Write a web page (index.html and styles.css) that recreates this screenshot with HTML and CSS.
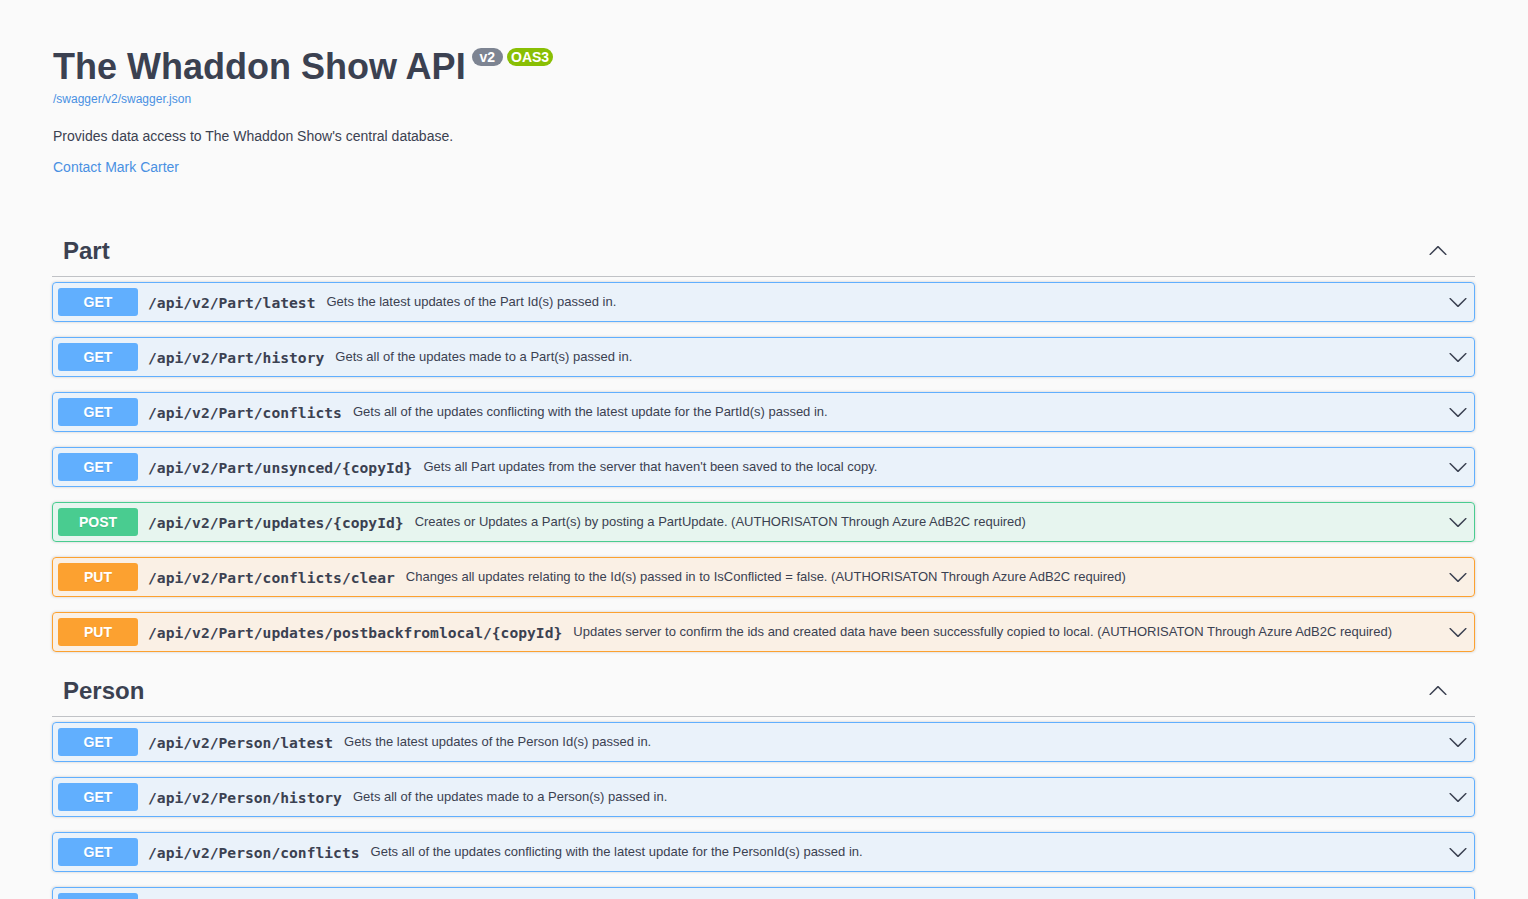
FILE: index.html
```html
<!DOCTYPE html>
<html lang="en">
<head>
<meta charset="utf-8">
<title>The Whaddon Show API</title>
<link rel="stylesheet" href="styles.css">
</head>
<body>
<div class="swagger-ui">
  <div class="wrapper">
    <section class="info">
      <hgroup class="main">
        <h2 class="title">The Whaddon Show API<small class="badge"><span class="version"> v2 </span></small><small class="badge oas"><span class="version">OAS3</span></small></h2>
        <a class="url" href="#">/swagger/v2/swagger.json</a>
      </hgroup>
      <p class="description">Provides data access to The Whaddon Show's central database.</p>
      <div class="contact"><a href="#">Contact Mark Carter</a></div>
    </section>

    <section class="tag-section">
      <h3 class="tag">
        <span class="tag-name">Part</span>
        <button class="expand" aria-label="collapse"><svg width="20" height="20" viewBox="0 0 20 20"><path d="M17.418 14.908c.272.268.709.268.979 0s.271-.701 0-.969l-7.908-7.83c-.27-.268-.707-.268-.979 0l-7.908 7.83c-.27.268-.27.701 0 .969.271.268.709.268.979 0L10 7.767l7.418 7.141z"/></svg></button>
      </h3>
      <div class="opblock get"><div class="summary"><span class="method">GET</span><span class="path">/api/v2/Part/latest</span><span class="desc">Gets the latest updates of the Part Id(s) passed in.</span><svg class="arrow" width="20" height="20" viewBox="0 0 20 20"><path d="M17.418 6.109c.272-.268.709-.268.979 0s.271.701 0 .969l-7.908 7.83c-.27.268-.707.268-.979 0l-7.908-7.83c-.27-.268-.27-.701 0-.969.271-.268.709-.268.979 0L10 13.25l7.418-7.141z"/></svg></div></div>
      <div class="opblock get"><div class="summary"><span class="method">GET</span><span class="path">/api/v2/Part/history</span><span class="desc">Gets all of the updates made to a Part(s) passed in.</span><svg class="arrow" width="20" height="20" viewBox="0 0 20 20"><path d="M17.418 6.109c.272-.268.709-.268.979 0s.271.701 0 .969l-7.908 7.83c-.27.268-.707.268-.979 0l-7.908-7.83c-.27-.268-.27-.701 0-.969.271-.268.709-.268.979 0L10 13.25l7.418-7.141z"/></svg></div></div>
      <div class="opblock get"><div class="summary"><span class="method">GET</span><span class="path">/api/v2/Part/conflicts</span><span class="desc">Gets all of the updates conflicting with the latest update for the PartId(s) passed in.</span><svg class="arrow" width="20" height="20" viewBox="0 0 20 20"><path d="M17.418 6.109c.272-.268.709-.268.979 0s.271.701 0 .969l-7.908 7.83c-.27.268-.707.268-.979 0l-7.908-7.83c-.27-.268-.27-.701 0-.969.271-.268.709-.268.979 0L10 13.25l7.418-7.141z"/></svg></div></div>
      <div class="opblock get"><div class="summary"><span class="method">GET</span><span class="path">/api/v2/Part/unsynced/{copyId}</span><span class="desc">Gets all Part updates from the server that haven't been saved to the local copy.</span><svg class="arrow" width="20" height="20" viewBox="0 0 20 20"><path d="M17.418 6.109c.272-.268.709-.268.979 0s.271.701 0 .969l-7.908 7.83c-.27.268-.707.268-.979 0l-7.908-7.83c-.27-.268-.27-.701 0-.969.271-.268.709-.268.979 0L10 13.25l7.418-7.141z"/></svg></div></div>
      <div class="opblock post"><div class="summary"><span class="method">POST</span><span class="path">/api/v2/Part/updates/{copyId}</span><span class="desc">Creates or Updates a Part(s) by posting a PartUpdate. (AUTHORISATON Through Azure AdB2C required)</span><svg class="arrow" width="20" height="20" viewBox="0 0 20 20"><path d="M17.418 6.109c.272-.268.709-.268.979 0s.271.701 0 .969l-7.908 7.83c-.27.268-.707.268-.979 0l-7.908-7.83c-.27-.268-.27-.701 0-.969.271-.268.709-.268.979 0L10 13.25l7.418-7.141z"/></svg></div></div>
      <div class="opblock put"><div class="summary"><span class="method">PUT</span><span class="path">/api/v2/Part/conflicts/clear</span><span class="desc">Changes all updates relating to the Id(s) passed in to IsConflicted = false. (AUTHORISATON Through Azure AdB2C required)</span><svg class="arrow" width="20" height="20" viewBox="0 0 20 20"><path d="M17.418 6.109c.272-.268.709-.268.979 0s.271.701 0 .969l-7.908 7.83c-.27.268-.707.268-.979 0l-7.908-7.83c-.27-.268-.27-.701 0-.969.271-.268.709-.268.979 0L10 13.25l7.418-7.141z"/></svg></div></div>
      <div class="opblock put"><div class="summary"><span class="method">PUT</span><span class="path">/api/v2/Part/updates/postbackfromlocal/{copyId}</span><span class="desc">Updates server to confirm the ids and created data have been successfully copied to local. (AUTHORISATON Through Azure AdB2C required)</span><svg class="arrow" width="20" height="20" viewBox="0 0 20 20"><path d="M17.418 6.109c.272-.268.709-.268.979 0s.271.701 0 .969l-7.908 7.83c-.27.268-.707.268-.979 0l-7.908-7.83c-.27-.268-.27-.701 0-.969.271-.268.709-.268.979 0L10 13.25l7.418-7.141z"/></svg></div></div>
    </section>

    <section class="tag-section">
      <h3 class="tag">
        <span class="tag-name">Person</span>
        <button class="expand" aria-label="collapse"><svg width="20" height="20" viewBox="0 0 20 20"><path d="M17.418 14.908c.272.268.709.268.979 0s.271-.701 0-.969l-7.908-7.83c-.27-.268-.707-.268-.979 0l-7.908 7.83c-.27.268-.27.701 0 .969.271.268.709.268.979 0L10 7.767l7.418 7.141z"/></svg></button>
      </h3>
      <div class="opblock get"><div class="summary"><span class="method">GET</span><span class="path">/api/v2/Person/latest</span><span class="desc">Gets the latest updates of the Person Id(s) passed in.</span><svg class="arrow" width="20" height="20" viewBox="0 0 20 20"><path d="M17.418 6.109c.272-.268.709-.268.979 0s.271.701 0 .969l-7.908 7.83c-.27.268-.707.268-.979 0l-7.908-7.83c-.27-.268-.27-.701 0-.969.271-.268.709-.268.979 0L10 13.25l7.418-7.141z"/></svg></div></div>
      <div class="opblock get"><div class="summary"><span class="method">GET</span><span class="path">/api/v2/Person/history</span><span class="desc">Gets all of the updates made to a Person(s) passed in.</span><svg class="arrow" width="20" height="20" viewBox="0 0 20 20"><path d="M17.418 6.109c.272-.268.709-.268.979 0s.271.701 0 .969l-7.908 7.83c-.27.268-.707.268-.979 0l-7.908-7.83c-.27-.268-.27-.701 0-.969.271-.268.709-.268.979 0L10 13.25l7.418-7.141z"/></svg></div></div>
      <div class="opblock get"><div class="summary"><span class="method">GET</span><span class="path">/api/v2/Person/conflicts</span><span class="desc">Gets all of the updates conflicting with the latest update for the PersonId(s) passed in.</span><svg class="arrow" width="20" height="20" viewBox="0 0 20 20"><path d="M17.418 6.109c.272-.268.709-.268.979 0s.271.701 0 .969l-7.908 7.83c-.27.268-.707.268-.979 0l-7.908-7.83c-.27-.268-.27-.701 0-.969.271-.268.709-.268.979 0L10 13.25l7.418-7.141z"/></svg></div></div>
      <div class="opblock get"><div class="summary"><span class="method">GET</span><span class="path">/api/v2/Person/unsynced/{copyId}</span><span class="desc">Gets all Person updates from the server that haven't been saved to the local copy.</span><svg class="arrow" width="20" height="20" viewBox="0 0 20 20"><path d="M17.418 6.109c.272-.268.709-.268.979 0s.271.701 0 .969l-7.908 7.83c-.27.268-.707.268-.979 0l-7.908-7.83c-.27-.268-.27-.701 0-.969.271-.268.709-.268.979 0L10 13.25l7.418-7.141z"/></svg></div></div>
    </section>
  </div>
</div>
</body>
</html>
```

FILE: styles.css
```css
html, body {
  margin: 0;
  padding: 0;
  background: #fafafa;
}

body {
  font-family: "Liberation Sans", Arial, sans-serif;
  color: #3b4151;
}

.wrapper {
  box-sizing: border-box;
  max-width: 1424px;
  margin: 0 auto;
  padding-right: 1px;
}

/* ---------- info ---------- */
.info {
  padding-top: 46px;
}

.main {
  margin: 0;
}

.title {
  display: flex;
  align-items: flex-start;
  margin: 0;
  padding-left: 1px;
  font-size: 36px;
  line-height: 41px;
  font-weight: 700;
  color: #3b4151;
}

.badge {
  display: inline-block;
  margin: 2px 0 0 4px;
  padding: 2px 4px;
  border-radius: 57px;
  background: #7d8492;
  color: #fff;
  font-size: 14px;
  line-height: 14.4px;
  font-weight: 700;
}

.badge:first-of-type {
  margin-left: 6px;
}

.badge.oas {
  background: #89bf04;
}

.version {
  white-space: pre;
}

.url {
  display: block;
  margin-top: 5px;
  padding-left: 1px;
  font-size: 12px;
  line-height: 14px;
  color: #4990e2;
  text-decoration: none;
}

.description {
  margin: 22px 0 15px;
  padding-left: 1px;
  font-size: 14px;
  line-height: 16px;
}

.contact {
  padding-left: 1px;
  font-size: 14px;
  line-height: 16px;
}

.contact a {
  color: #4990e2;
  text-decoration: none;
}

/* ---------- tag sections ---------- */
.tag-section {
  display: flex;
  flex-direction: column;
}

.info + .tag-section {
  margin-top: 52px;
}

.tag {
  display: flex;
  align-items: center;
  margin: 0 0 5px;
  padding: 9px 20px 11px 10px;
  border-bottom: 1px solid rgba(59, 65, 81, 0.3);
  font-size: 24px;
  line-height: 29px;
  font-weight: 700;
  color: #3b4151;
}

.tag-name {
  flex: 1;
  padding-left: 1px;
}

.expand {
  display: flex;
  margin-bottom: 2px;
  padding: 0 7px 0 8px;
  border: none;
  background: none;
}

.expand svg,
.arrow {
  fill: #3b4151;
  flex: none;
}

.arrow {
  margin-right: 1px;
}

/* ---------- operation blocks ---------- */
.opblock {
  margin: 0 0 15px;
  border: 1px solid #61affe;
  border-radius: 4px;
  background: rgba(97, 175, 254, 0.1);
  box-shadow: 0 0 3px rgba(0, 0, 0, 0.19);
}

.summary {
  display: flex;
  align-items: center;
  padding: 5px;
}

.method {
  flex: none;
  min-width: 80px;
  padding: 6px 0;
  border-radius: 3px;
  background: #61affe;
  color: #fff;
  font-size: 14px;
  line-height: 16px;
  font-weight: 700;
  text-align: center;
  text-shadow: 0 1px 0 rgba(0, 0, 0, 0.1);
}

.path {
  flex: none;
  padding: 0 11px 0 10px;
  font-family: "DejaVu Sans Mono", "Liberation Mono", monospace;
  font-size: 14.65px;
  font-weight: 700;
  color: #3b4151;
}

.desc {
  flex: 1;
  margin-top: -1px;
  font-size: 13px;
  color: #3b4151;
}

.opblock.post {
  border-color: #49cc90;
  background: rgba(73, 204, 144, 0.1);
}

.opblock.post .method {
  background: #49cc90;
}

.opblock.put {
  border-color: #fca130;
  background: rgba(252, 161, 48, 0.1);
}

.opblock.put .method {
  background: #fca130;
}
```
